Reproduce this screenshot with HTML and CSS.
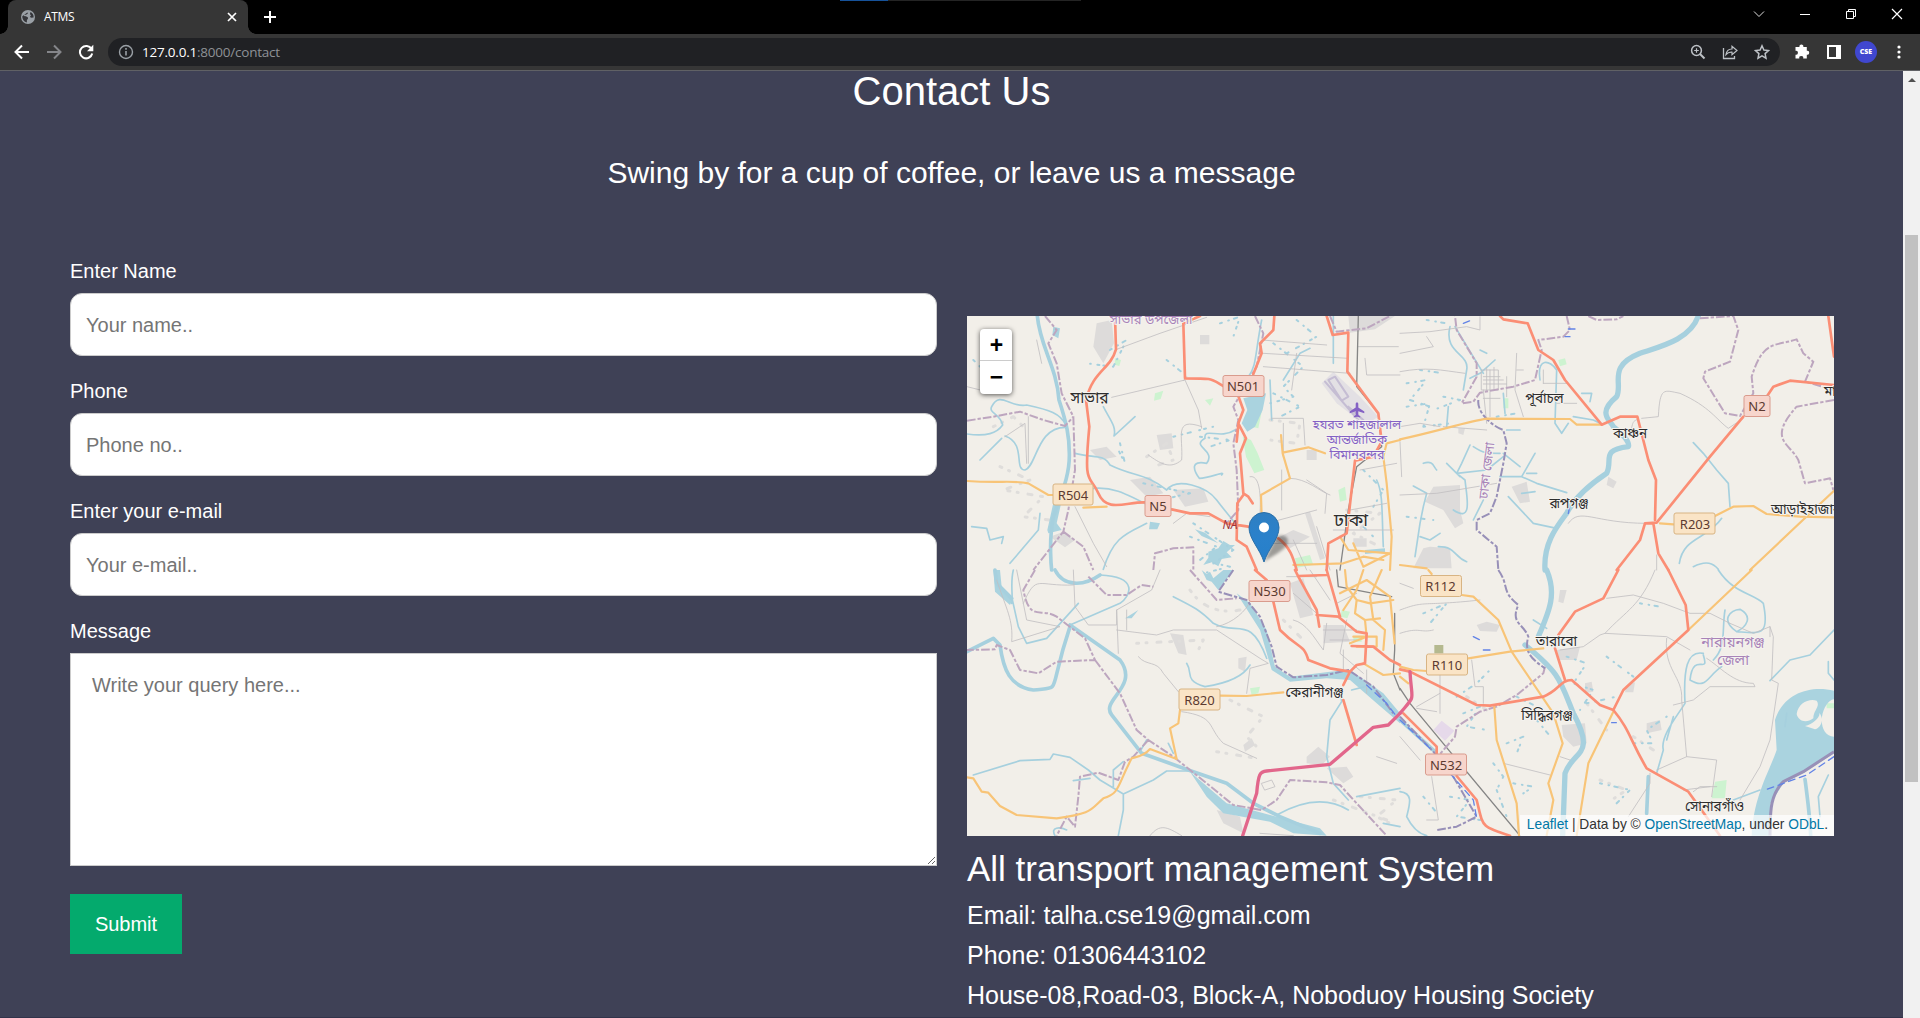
FILE: index.html
```html
<!DOCTYPE html>
<html lang="en">
<head>
<meta charset="utf-8">
<title>ATMS</title>
<link rel="stylesheet" href="styles.css">
</head>
<body>
<div class="browser">
  <header class="tabstrip">
    <span class="loadbar"></span>
    <div class="tab">
      <svg class="globe" viewBox="0 0 14 14"><circle cx="7" cy="7" r="7" fill="#9aa0a6"/><path d="M8 1.300 6.400 2.400l.5 1.200L5 4.800 3.500 4.700 2.700 6 4.800 6.200l2 1 .2 1.500-1.100 1.300v2.500A5.800 5.800 0 0 1 1.300 6.200M9.500 2l-.6 2.200 1.300 1-1.200 1 .8 1.600 2.800-.2A5.800 5.800 0 0 0 9.500 2" fill="#35363a"/></svg>
      <span class="tab-title">ATMS</span>
      <svg class="tab-close" viewBox="0 0 10 10"><path d="M1 1l8 8M9 1l-8 8" stroke="#fff" stroke-width="1.700"/></svg>
    </div>
    <svg class="newtab" viewBox="0 0 12 12"><path d="M6 0v12M0 6h12" stroke="#fff" stroke-width="2"/></svg>
    <div class="winbtns">
      <svg viewBox="0 0 12 12"><path d="M1 3.500l5 5 5-5" fill="none" stroke="#ddd"/></svg>
      <svg viewBox="0 0 12 12"><path d="M1 6.500h10" stroke="#fff"/></svg>
      <svg viewBox="0 0 12 12"><path d="M1.500 3.500h7v7h-7zM3.500 3.500v-2h7v7h-2" fill="none" stroke="#fff"/></svg>
      <svg viewBox="0 0 12 12"><path d="M1 1l10 10M11 1L1 11" stroke="#fff" stroke-width="1.200"/></svg>
    </div>
  </header>
  <nav class="toolbar">
    <div class="navbtns">
      <svg viewBox="0 0 16 16"><path d="M15 8H2M8 1.500L1.500 8 8 14.500" fill="none" stroke="#fff" stroke-width="2"/></svg>
      <svg viewBox="0 0 16 16"><path d="M1 8h13M8 1.500L14.500 8 8 14.500" fill="none" stroke="#85868a" stroke-width="2"/></svg>
      <svg viewBox="0 0 16 16"><path d="M13.500 5A6.200 6.200 0 1 0 14.200 9.500" fill="none" stroke="#fff" stroke-width="2"/><path d="M15.300.8v6.400H9z" fill="#fff"/></svg>
    </div>
    <div class="omnibox">
      <svg class="info" viewBox="0 0 16 16"><circle cx="8" cy="8" r="6.500" fill="none" stroke="#9aa0a6" stroke-width="1.400"/><path d="M8 7v4.500M8 4v1.700" stroke="#9aa0a6" stroke-width="1.600"/></svg>
      <span class="url"><b>127.0.0.1</b>:8000/contact</span>
      <div class="boxicons">
        <svg viewBox="0 0 16 16"><circle cx="6.500" cy="6.500" r="4.900" fill="none" stroke="#bdc1c6" stroke-width="1.500"/><path d="M10 10l4.500 4.500" stroke="#bdc1c6" stroke-width="2"/><path d="M6.500 4.200v4.600M4.200 6.500h4.600" stroke="#bdc1c6" stroke-width="1.200"/></svg>
        <svg viewBox="0 0 16 16"><path d="M1.500 4v10.500h11V12" fill="none" stroke="#bdc1c6" stroke-width="1.300"/><path d="M4 10.500C4.500 7 7 5 10 5V2.200L15 6.500 10 10.800V8.200C7.500 8 5.500 8.700 4 10.500z" fill="none" stroke="#bdc1c6" stroke-width="1.200"/></svg>
        <svg viewBox="0 0 16 16"><path d="M8 1.800l1.900 4.200 4.600.5-3.400 3.100.9 4.600L8 11.900l-4 2.300.9-4.600L1.500 6.500 6.100 6z" fill="none" stroke="#bdc1c6" stroke-width="1.500"/></svg>
      </div>
    </div>
    <svg class="ext" viewBox="0 0 16 16"><path d="M1.500 3.500h4a2 2 0 1 1 3.800 0h3.500v3.800a2 2 0 1 1 0 3.900v3.800H9.200a2 2 0 1 0-3.900 0H1.500v-3.800a2 2 0 1 0 0-3.900z" fill="#fff"/></svg>
    <svg class="panel" viewBox="0 0 14 14"><path d="M0 0h14v14H0zM2 2v10h7V2z" fill="#fff" fill-rule="evenodd"/></svg>
    <span class="avatar">CSE</span>
    <svg class="kebab" viewBox="0 0 4 14"><circle cx="2" cy="2" r="1.600" fill="#fff"/><circle cx="2" cy="7" r="1.600" fill="#fff"/><circle cx="2" cy="12" r="1.600" fill="#fff"/></svg>
  </nav>
  <div class="viewport">
    <main class="page">
      <h1>Contact Us</h1>
      <p class="lead">Swing by for a cup of coffee, or leave us a message</p>
      <div class="columns">
        <form class="form">
          <label for="name">Enter Name</label>
          <input id="name" type="text" placeholder="Your name..">
          <label for="phone">Phone</label>
          <input id="phone" type="text" placeholder="Phone no..">
          <label for="mail">Enter your e-mail</label>
          <input id="mail" type="text" placeholder="Your e-mail..">
          <label for="msg">Message</label>
          <textarea id="msg" placeholder="Write your query here..."></textarea>
          <button type="button">Submit</button>
        </form>
        <section class="info-col">
          <div class="map">
            <svg class="tiles" viewBox="0 0 867 520">
              <!-- north-west -->
              <g transform="translate(-7 -6) scale(.33333)">
                <g class="urban">
                  <path d="M410 40L455 30 462 100 430 160 400 110zM720 75h28v28h-28zM1165 18h140l-60 40-75 10zM510 510l60-10 40 50-50 10zM590 375l45-5 5 45-40 5zM640 540l90-5 15 40-70 15zM270 680l40-15 35 25-30 22zM1040 420h30v30h-30zM390 420l50-10 30 30-50 10zM940 690l60-30 50 20-60 35zM1180 685h40v25h-40zM1050 605l45 140-15 5-45-140z"/>
                  <path class="specks" d="M120 470l90 40-80 30 120 20-60 60 80 10M560 440l60-40 20 50-60 20M100 350l60-30 40 40M930 330l90 10-10 60-80-10M1160 600l100 10-80 60 80 40"/>
                </g>
                <path class="airport" d="M1085 220L1120 185 1200 260 1255 320 1215 345 1130 280z"/>
                <path class="runway" d="M1095 215l100 115M1105 210l20-10 40 60-20 12zM1165 290l45 40"/>
                <g class="park"><path d="M848 380l25 10 20 40 20 50-30 10-25-50zM465 145l18 5-5 18-14-4zM1005 745l45-10 10 30-50 8zM1135 540l20-10 5 40-20 5zM585 250l25-8-8 25-20 5zM875 350l15-40 15-5-10 50zM735 270l25-5-10 22z"/></g>
                <g class="water">
                  <path class="lake" d="M850 265L918 250 908 300 885 350 862 365 845 340 862 300zM262 660l20-90 28-20-20 90 15 20-40 10zM675 640l30 18 30 10 40 32-50-22-20-20zM745 725l30-10 15-22 20 12 15 0-25 22 15 15-30 5-10 22-20-12-25 8 15-22zM280 50l20 5-5 30-18-10zM570 635l30 5-8 18-25 0zM1215 720l60-5v12l-60 5z"/>
                  <path class="big" d="M232 18C240 110 290 170 297 270 320 340 328 380 328 430 330 500 300 560 280 620 265 700 275 780 275 780"/>
                  <path d="M21 372C80 380 110 370 128 345 120 310 85 310 95 290 120 240 150 295 200 285 270 300 300 310 318 345M60 450l65-65M135 378C200 400 160 480 195 480 230 470 230 350 318 352M345 430C400 445 430 430 450 465 520 500 560 490 620 540 650 500 740 530 770 570 800 610 820 630 825 640M560 640C500 670 460 680 430 778M240 610L235 660 150 760M430 290C450 330 470 350 462 378L525 320M825 360C780 390 730 350 735 385 690 410 770 420 740 460 690 450 700 480 718 505 750 505 800 480 785 495M905 30C885 130 890 170 865 200M1120 18L1120 160M35 650L80 655 90 690 130 680 125 700M930 210l5 120M970 210l50-80 30-15M1250 510c20 40 15 100 20 200M370 540c80-20 130 10 240 70"/>
                  <path class="specks" d="M40 150l60 60-50 20M450 120l50-30-40 80-80-10M620 150l50 40M780 40l60-20-20 60M1010 30l60 50-90 50M640 380l120-30M480 400l15 60-20-40M550 520l140 30-90 20M720 380l90 10-60 20M940 100l90 70-60 60 30 30-70 20M700 640l120 80-60 40M690 680l80 30-50 40 90 20-80 20M1180 620l60 60M940 250l80 40-60 30M1210 480l60 60-30 50"/>
                </g>
                <g class="minor"><path d="M470 118L600 70 740 22M455 262L675 210 715 300 725 355M725 350C640 320 670 380 665 450 630 480 600 460 565 435M905 90L1100 105M910 130L1165 145M910 170l260 20M1195 110h120M1215 145l5 50h100M935 325l95 0 5 80M965 480l0 120M1040 510l60 40-5 60M990 505c50 0 90 40 120 50M640 640L680 610 750 620M345 590L400 700 440 770M205 320l0 140M135 380l60-40 5 120M680 200l-10 12M870 500c40-10 30 110 30 110M920 640l150-40M930 700l140 0M1000 690l40 90M1070 650l40 130M1170 600l110-20M1120 660h180M230 90l15 70M21 230l40 10M1200 480l110-20M970 340v100M1010 130l-15 110"/></g>
                <path class="rail" d="M1195 18L1190 230 1255 310 1265 410 1190 470 1165 600 1140 780"/>
                <g class="bound"><path d="M255 18L290 60 265 100 290 160 305 250 340 320 345 480 325 600 310 665 220 780M21 332L100 320 180 305 250 330 315 348 340 320M310 665L370 710 400 780M885 18L910 70 890 170 820 290 835 330 820 400 830 480 835 600 800 640M1110 18L1130 65 1220 55 1290 18M580 780L585 730 640 715 700 712 700 780"/></g>
                <g class="sec"><path d="M21 513C120 520 160 510 205 520L265 555 290 555M370 593L440 590M1320 390L1280 400 1270 440 1280 520 1295 680 1290 780M963 375L968 430 990 505 903 555 905 620M968 428L1045 412 1095 430M1140 680L1165 720 1290 730 1210 770 1180 700M1000 765l150-5 60-20 60 10"/></g>
                <g class="prim"><path d="M465 18L468 118C450 180 400 180 378 270L388 350C370 540 390 490 415 550 440 610 500 575 555 577M635 598L690 610 745 610 800 640 865 650M720 18L670 40 675 205C760 205 750 205 790 228M943 18L940 60 900 100 905 130 880 192M835 258L850 300 835 340 858 385 840 430 850 550 865 560 878 580M835 345L830 395M850 555L832 580 830 690 860 710 890 780M955 685C990 710 1000 745 1010 780M1100 18L1118 75 1165 68 1162 185 1210 250 1255 310 1265 395 1240 440 1185 452 1160 670 1105 700 1100 780"/></g>
              </g>
              <!-- north-east -->
              <g transform="translate(433 -6) scale(.33333)">
                <g class="urban"><path d="M100 530L180 525 180 600 190 640 165 655 130 600 75 575zM335 530l45-15 10 60-30 5zM90 710l60 5 5 60H40l30-60zM625 500l25 15-10 20-20-10zM175 355l20 0-5 20-15-5z"/></g>
                <path class="park" d="M475 150l20-5 5 18-20 6zM310 265h15v30h-15z"/>
                <g class="water">
                  <path class="huge" d="M895 18C870 90 780 110 720 130 620 170 670 220 650 260 590 310 630 330 640 350 670 370 690 400 685 410 600 420 640 450 620 490 560 530 520 570 500 610 470 650 430 700 435 780"/>
                  <path d="M150 50C130 130 210 130 200 180L190 240M165 50L250 190M210 205L240 190 285 150M40 528L80 550 70 590 60 640 45 740M160 600C220 640 200 560 195 510L170 490 185 460 210 405M140 460l40 40M170 490L260 480 310 440M300 500L365 500 410 520 500 548M365 500L405 430M380 490h30M310 430L360 470M325 560L400 640 470 655M60 680L90 690 120 670M115 710C170 710 160 740 200 755M880 398L910 430 950 480 985 520 990 590M965 625C920 690 850 680 838 760M880 770C920 750 940 760 955 778M420 210C410 140 450 150 470 180L465 340 485 370 505 340M70 460c30-10 30 10 40 20M145 290l-5 60M545 250l30 0-5 25M320 360h40M520 320l60 10 20 10M220 630l30-60M365 550l40-5M260 130l-20-10M310 250l5 60M220 410c30 20 40 20 80 20"/>
                  <path class="specks" d="M20 220l60-10-50 60 60 20M60 180l70 10M130 260l50 10-80 30M20 290l70-10-20 70 80-10M80 30l60 10M290 320l60-10M20 620l80 10"/>
                </g>
                <g class="minor"><path d="M0 70L90 65 200 50 240 60 240 20M0 130L100 110 80 80M0 185C80 170 120 180 195 190M0 395L5 500M0 555L110 550 290 520M725 325L775 320C780 230 790 240 840 250 930 290 950 330 985 355L1030 325M690 380C700 320 700 340 715 325M505 640C540 590 580 640 740 640M350 130L345 240 370 320M430 220h70M430 180v40M245 180h50v60h-50zM250 200h50M260 172v70M282 172v70M250 222h70M270 180v140M320 200v60M250 210h60M250 265h50M260 340L250 240M130 350l130 10M0 350l60-10 60 10M470 280h60M770 735V780M350 180h20"/></g>
                <g class="bound"><path d="M500 18L510 60 490 80 415 90 425 120 405 210 340 230 240 248 220 275 185 280 230 200 230 160 170 60 165 18M565 18L590 30 650 28 670 18M900 25L1000 18 1015 60 990 155 915 185 910 205 975 310 1020 318 1060 250 1055 200C1090 90 1120 110 1190 88L1210 130 1240 155 1215 215 1302 240M1302 270L1190 290C1100 390 1170 400 1195 450L1215 520 1290 505 1300 540"/></g>
                <path class="bound dist" d="M235 270C230 310 280 350 310 360L320 400 310 460 290 560 270 610 230 630 230 660 290 710 295 780"/>
                <g class="sec"><path d="M0 388C110 365 200 335 260 326L510 327 530 344 605 344M780 640L820 643M945 618L1000 590 1060 588 1100 612 1200 620 1302 622M1302 542L1050 780M0 765l80 10"/></g>
                <g class="prim"><path d="M300 18L310 28 383 40 415 120 460 150 495 210 605 344 660 320 712 320 745 450 768 510 765 630M1285 18L1302 140M1302 225L1170 212 1120 230 1100 260M1030 320L930 440 770 638 735 640 720 690 650 780M760 640L775 730 805 780"/></g>
                <path class="canal" d="M190 40l20-8M495 80h15M505 57h22M508 595l-3 15"/>
              </g>
              <!-- south-west -->
              <g transform="translate(-7 254) scale(.33333)">
                <g class="urban"><path d="M630 190l40 5 10 60-25-5zM835 265l25-5-5 45-20-10zM1040 560L1075 530 1110 560 1085 585 1040 580zM850 525l25-20 10 20-30 20zM1100 595l60-5 20 30-30 20zM770 720l70 20 10 50-60-30zM990 40l40-15 30 110-40 10zM1090 165h60l20 50-80 5z"/><path class="specks" d="M810 390l100 50-50 60 30 30M770 545l120 20M1200 680l110 10-60 50 60 30M1120 690l160 60M530 220l200-10-20 40M690 60c40 60 100 70 150 60M970 150l60 60"/></g>
                <path class="park" d="M870 355l30-5-5 20-20 5zM1180 200h25v15h-25zM1145 120l25 5-8 20-20-5z"/>
                <g class="water">
                  <path class="lake" d="M725 0L740 12 750 5 760 25 790 0 820 0 775 60 755 35 740 30zM830 70L870 100 920 180 945 290 990 320 1110 305 1170 300 1270 370 1320 430 1320 460 1250 400 1170 330 1100 325 990 335 935 300 900 180zM690 605L800 700 930 735 1080 775 1100 797 1000 790 930 755 790 730 740 680zM495 145l40-25-20 25zM100 0l20 0 5 50 35 35-10 20-45-40z"/>
                  <path class="big" d="M105 0L110 40 155 85M330 165L480 270C540 350 420 390 455 435L545 550 700 605 800 640 880 700 960 740 1080 790M330 170C260 380 310 350 220 360 150 350 130 300 120 225L100 205 21 245M285 0C310 50 370 50 420 15"/>
                  <path d="M420 15C540 20 510 80 480 100L330 165M155 80L175 170 200 220 260 205 355 100M40 615L180 572 270 568 280 552 330 562 385 600 420 630 490 672 580 630 620 603 700 603M490 672L490 720 475 797M490 575L460 600 460 650M560 510L540 545M640 80C700 110 720 120 760 160 830 200 870 130 920 265M680 280C700 310 670 330 735 350 800 340 850 320 870 285M1145 395L1110 450 1100 560 1120 640 1165 690M1190 680L1320 655M950 735C1030 690 1100 680 1165 720M160 0C150 40 160 80 155 100M285 797C270 770 300 770 320 780M1270 760l50 10M340 632L390 625M625 520l15 30M1145 395L1140 360M1175 360l40-10"/>
                </g>
                <g class="minor"><path d="M340 0L345 110 385 165 470 165 470 120 575 60 600 0M470 120L475 250M470 180L590 195 640 180 770 180 900 265 925 280 870 295 860 370M535 260C560 290 590 270 610 310L655 365M665 425C770 440 740 470 790 520L890 565M500 120v60M190 100C230 10 230 50 340 45M110 30C140 120 160 150 155 215L300 170 200 150 170 0M570 797C600 760 620 770 665 797M770 170C820 160 860 120 870 95M1000 150C1040 160 1060 200 1090 240L1100 160M1130 100l60-30M1050 0l60 90M980 20l90 0M1160 150l-20 100 70 60M1090 180h100M1110 210h80M1070 130L1000 70M1220 300v70M1150 240v60M900 790L1000 797M1250 560l60 20M905 640l30-10 10 20-30 10z"/></g>
                <path class="rail" d="M1130 0L1135 50 1240 70 1295 80M1304 130V240L1300 310 1320 360"/>
                <g class="bound"><path d="M225 0L190 60C210 160 240 110 290 140L375 205 405 270 290 275 235 310 180 300 150 240 110 225 105 238 21 240M405 270L480 370 530 480 565 510 640 560 740 640 820 705 905 720 950 690 990 630 1100 637 1140 645 1190 700 1280 797M565 510L520 560 495 575 475 630 415 608 360 620 355 680 345 770 320 740 290 797M385 20L440 75 500 75 545 45 580 50M690 0L770 90 830 85"/></g>
                <path class="bound dist" d="M820 0L775 65 860 90 900 140 935 230 950 290 1000 322 1100 315 1165 300 1240 350 1300 430"/>
                <path class="canal" d="M1220 345l60 55 30 40"/>
                <g class="sec"><path d="M21 622L40 625 65 665 85 668 120 708 170 735 290 745C400 730 390 720 430 685 480 670 470 650 515 565 530 560 550 560 570 537L650 567 630 475 655 460 660 420M780 377L860 378 970 367M1155 0L1160 50 1190 90 1185 130 1215 150 1220 200 1170 220M1190 90L1230 100 1300 90M1265 0L1230 80 1240 150 1275 180 1270 240M1140 70L1220 30 1290 80 1304 220M1215 150L1260 145M1150 120L1190 60 1210 0M1210 280L1270 315 1320 310M1180 200h70v30h-60"/></g>
                <g class="prim"><path d="M885 0L920 30M940 95L960 180C1020 240 1030 220 1045 270L1110 295 1170 305 1190 285 1215 280 1220 190 1190 185 1135 140 1070 135M1005 0L1015 20 1070 120 1078 170M1015 18L1100 15M1100 0L1140 140M1175 228L1240 230 1290 270 1320 285M1170 305L1150 345M1150 390L1190 525"/></g>
                <path class="mway" d="M848 797L890 670C895 610 900 605 920 603L1110 583 1240 472 1285 465 1320 430"/>
              </g>
              <!-- south-east -->
              <g transform="translate(433 254) scale(.33333)">
                <g class="urban"><path d="M230 165L260 155 300 165 290 185 240 183zM485 465L555 460 560 520 520 530 490 500zM480 60l20 0-10 40-15-5zM470 240l70-10-10 40-50 0zM555 340l20-5 5 30-25 5zM680 345l25-8-5 30-25 0zM740 460l40-10 5 30-45 10z"/><path class="specks" d="M200 380l60 40M600 630l80 30-60 40M700 500l60 40M560 400l60 80"/></g>
                <path d="M100 480l25-28 38 30-28 30z" fill="#e6d9ea"/><path d="M103 225h27v25h-27z" fill="#b5b98f"/>
                <path class="park" d="M945 635L980 630 975 685 935 685zM1280 400h22v15h-22z"/>
                <g class="water">
                  <path class="lake" fill-rule="evenodd" d="M1302 362C1230 345 1150 370 1125 450L1130 540C1110 600 1060 680 1055 797H1107L1112 700 1150 640 1210 610 1302 550V500C1275 500 1262 470 1266 440 1270 415 1285 390 1302 388zM1190 432C1195 400 1225 385 1250 392 1262 410 1240 420 1240 445 1220 460 1195 455 1190 432zM1215 468C1240 462 1262 440 1258 428 1275 450 1260 475 1245 478z"/>
                  <path class="huge" d="M440 0C470 70 450 120 415 200M375 225C480 310 480 330 520 430 590 560 520 540 495 610L488 797"/>
                  <path class="big" d="M0 450L105 545M745 620L740 730M1215 628C1222 680 1230 740 1232 797"/>
                  <path d="M955 0C1000 70 1060 70 1090 100 1110 200 1080 190 1010 185 960 150 990 120 1020 118 1060 140 1040 170 1010 185M975 120C965 180 980 230 940 270M910 255C930 320 880 240 870 330 920 360 920 320 965 290M910 250C860 240 850 300 855 400 830 440 780 500 790 540L770 610M820 440L800 510M1110 332L1170 270 1230 255 1302 180M1285 275V310L1302 330M1000 690L1080 660M0 665C40 670 30 700 20 740 30 760 50 790 80 797M400 150l40 25M1285 615L1255 680 1260 740M1160 430l-5 40"/>
                  <path class="specks" d="M70 130l70-30-50 60M170 380l60-40 40-40M190 430l50-20-40 60 60 10M320 520l50-20-20 50M500 260l60 20-40 60 60 20-40 60M350 380l60 30M410 450l50 60M280 580l30 40-20 40 30 80M340 640l60 10-30 20M150 680l60 10-40 50 70 10M600 640l90 20-40 40M700 520l60 0-20-40 60-40M720 100l60 10M620 260l80 60M560 400l90-20M70 680l50 60"/>
                </g>
                <g class="minor"><path d="M0 120C80 90 60 110 240 90M0 190C60 170 60 190 100 180M620 85L700 75 790 100 870 130 930 130 990 160 1060 190 1110 170 1120 200 1115 330 1135 340 1110 510 1080 590 1020 690M765 0C720 110 680 120 615 190L800 200 870 240M480 240L550 230 600 195 615 190M800 205C790 300 850 320 845 390L860 560 950 570 935 680M820 405L880 390 930 350 1065 350 1060 340C1000 340 960 290 920 265M310 580L450 615M215 270L225 350 250 350 250 400M50 410l70-40M120 310V430M50 415l60 10M685 740L750 640 750 610M930 650L850 660M1110 170v30M0 500l60 70M95 620L115 750 80 750M770 600l90-40M480 560l30 10M0 40l40 15M950 650h-50l-20 15"/></g>
                <path class="rail" d="M0 355L30 400 150 545 360 797"/>
                <g class="bound"><path d="M100 575L165 500 170 470 240 425 290 410 350 375 430 310 435 290"/></g>
                <path class="bound dist" d="M295 0C330 50 300 60 355 105 330 160 370 160 385 200 370 250 400 270 435 295"/>
                <path class="bound dist solid" d="M1302 545L1210 605 1150 635C1105 680 1112 740 1110 797"/>
                <path class="bound dist" d="M0 440L100 545 160 620 230 740 170 770 110 780"/>
                <path class="canal" d="M1302 560L1220 615 1095 660M0 450l90 85M150 610L220 690 230 745M220 200l20 10M250 240h22M635 458h14"/>
                <g class="sec"><path d="M1055 0L865 180M85 0l10 12M185 75L220 80 295 150 335 245 460 430 488 520 445 640 460 690 440 797M205 265L330 245 430 235M0 290L40 300 80 303M283 410L290 510 350 700 357 797M640 425L565 580 530 797M0 320l25 20"/></g>
                <g class="prim"><path d="M655 0L610 85 525 125 475 195M465 235L495 330M805 0L857 105 865 180 670 360 640 420M0 298L30 305 230 405 270 407 430 380C480 360 480 330 515 330L600 405 640 420C690 480 690 510 740 595L865 665 890 700 960 797M10 430L110 530V550M170 618L230 690C250 770 240 770 330 797"/></g>
                <path class="mway" d="M30 305C35 400 50 370 0 430"/>
              </g>
              <g class="places">
                <text x="122.500" y="87" font-size="16">সাভার</text>
                <text class="city" x="384" y="210">ঢাকা</text>
                <text x="577.500" y="86.500">পূর্বাচল</text>
                <text x="663" y="122">কাঞ্চন</text>
                <text x="602" y="192">রূপগঞ্জ</text>
                <text x="839" y="198">আড়াইহাজার</text>
                <text class="edge" x="857" y="80">মা</text>
                <text x="589.500" y="329.500">তারাবো</text>
                <text x="347.500" y="381">কেরানীগঞ্জ</text>
                <text x="580" y="404">সিদ্ধিরগঞ্জ</text>
                <text x="747.500" y="495">সোনারগাঁও</text>
                <g class="purple">
                  <text x="184" y="8">সাভার উপজেলা</text>
                  <text class="wide" x="766" y="331">নারায়নগঞ্জ</text>
                  <text class="wide" x="766" y="349">জেলা</text>
                  <text transform="translate(524 155) rotate(-83)" x="0" y="0">ঢাকা জেলা</text>
                </g>
                <g class="violet">
                  <text x="390" y="113">হযরত শাহজালাল</text>
                  <text x="390" y="127.500">আন্তর্জাতিক</text>
                  <text x="390" y="142.500">বিমানবন্দর</text>
                </g>
              </g>
              <path d="M390 86l1.300 1.500v4l6 4v1.800l-6-2v3.700l2 1.500v1l-3.300-.8-3.300.8v-1l2-1.500v-3.700l-6 2v-1.800l6-4v-4z" fill="#8461c4"/>
              <g class="shields">
                <g class="n"><rect x="256" y="59.500" width="41" height="21" rx="2"/><rect x="178" y="179.500" width="26" height="21" rx="2"/><rect x="777" y="79.500" width="26" height="21" rx="2"/><rect x="282" y="264.500" width="41" height="21" rx="2"/><rect x="458.500" y="438" width="41" height="21" rx="2"/></g>
                <g class="r"><rect x="86" y="168" width="40" height="21" rx="2"/><rect x="707" y="197" width="41" height="21" rx="2"/><rect x="453.500" y="259.500" width="41" height="21" rx="2"/><rect x="459.500" y="338" width="41" height="21" rx="2"/><rect x="212" y="373" width="41" height="21" rx="2"/></g>
                <text x="276" y="75">N501</text><text x="191" y="195">N5</text><text x="790" y="95">N2</text><text x="302.500" y="280">N530</text><text x="479" y="453.500">N532</text>
                <text x="106" y="184">R504</text><text x="728" y="212.500">R203</text><text x="473.500" y="275">R112</text><text x="480" y="353.500">R110</text><text x="232.500" y="389">R820</text>
                <text class="na" x="263" y="213">NA</text>
              </g>
            </svg>
            <svg class="marker" viewBox="0 0 52 54">
              <defs><linearGradient id="pin" x2="0" y2="1"><stop offset="0" stop-color="#2f7fc2"/><stop offset=".5" stop-color="#2a81cb"/><stop offset="1" stop-color="#267fca"/></linearGradient><filter id="soft"><feGaussianBlur stdDeviation="1.800"/></filter></defs>
              <path d="M16 51L28 26C36 22 42 26 39 34 34 41 24 45 16 51z" fill="#000" opacity=".35" filter="url(#soft)"/>
              <path d="M16 51C12 38 1 28 1 16.500a15 15 0 0 1 30 0C31 28 20 38 16 51z" fill="url(#pin)" stroke="#2a6fa8"/>
              <circle cx="16" cy="16.500" r="5" fill="#fff"/>
            </svg>
            <div class="zoomctl"><span>+</span><span>−</span></div>
            <div class="attribution"><a>Leaflet</a> | Data by © <a>OpenStreetMap</a>, under <a>ODbL</a>.</div>
          </div>
          <h3>All transport management System</h3>
          <p>Email: talha.cse19@gmail.com</p>
          <p>Phone: 01306443102</p>
          <p>House-08,Road-03, Block-A, Noboduoy Housing Society</p>
        </section>
      </div>
    </main>
    <aside class="scrollbar"><span class="arrow"></span><span class="thumb"></span></aside>
  </div>
</div>
</body>
</html>
```
FILE: styles.css
```css
* { box-sizing: border-box; }
body { margin: 0; font-family: "Liberation Sans", Arial, sans-serif; background: #3f4156; }
.browser { display: flex; flex-direction: column; width: 1920px; height: 1018px; overflow: hidden; }
svg { display: block; }

/* Browser chrome */
.tabstrip { position: relative; display: flex; height: 34px; background: #000; padding-left: 8px; flex: none; }
.loadbar { position: absolute; left: 840px; top: 0; width: 241px; height: 1px; background: linear-gradient(90deg, #16529a 48px, #242424 48px); }
.tab { position: relative; display: flex; align-items: center; width: 240px; height: 34px; padding: 0 11px 0 13px; border-radius: 8px 8px 0 0; background: #363636; }
.tab::before, .tab::after { content: ""; position: absolute; bottom: 0; width: 8px; height: 8px; }
.tab::before { left: -8px; background: radial-gradient(circle at 0 0, #000 7.500px, #363636 8px); }
.tab::after { right: -8px; background: radial-gradient(circle at 100% 0, #000 7.500px, #363636 8px); }
.globe { width: 14px; height: 14px; }
.tab-title { margin-left: 9px; flex: 1; color: #fff; font: 12px/16px "Open Sans", "Noto Sans", sans-serif; letter-spacing: -.3px; padding-bottom: 1px; }
.tab-close { width: 10px; height: 10px; }
.newtab { width: 12px; height: 12px; margin: 11px 0 0 16px; }
.winbtns { display: flex; gap: 34px; margin: 8px 17px 0 auto; }
.winbtns svg { width: 12px; height: 12px; }
.toolbar { display: flex; align-items: center; height: 37px; padding: 0 18px 1px 14px; background: #363636; border-bottom: 1px solid #606165; flex: none; }
.navbtns { display: flex; gap: 16px; }
.navbtns svg { width: 16px; height: 16px; }
.omnibox { display: flex; align-items: center; width: 1672px; height: 28px; margin-left: 14px; padding: 0 10px; border-radius: 14px; background: #202124; }
.info { width: 16px; height: 16px; }
.url { margin-left: 8px; flex: 1; color: #8e9196; font: 13.500px "Open Sans", "Noto Sans", sans-serif; letter-spacing: -.22px; }
.url b { font-weight: 400; color: #fff; }
.boxicons { display: flex; gap: 16px; }
.boxicons svg { width: 16px; height: 16px; }
.ext { width: 16px; height: 17px; margin-left: 14px; }
.panel { width: 14px; height: 14px; margin-left: 17px; }
.avatar { width: 22px; height: 22px; margin-left: 14px; border-radius: 50%; background: #4047cf; color: #fff; font: 800 7px/21px "Open Sans", sans-serif; text-align: center; }
.kebab { width: 4px; height: 14px; margin-left: auto; margin-right: 1px; }

/* Page */
.viewport { display: flex; height: 947px; }
.page { width: 1903px; height: 947px; overflow: hidden; color: #fff; background: #3f4156; border-bottom: 1px solid #32334a; }
h1 { margin: 0 0 44px; font-size: 40px; line-height: 40px; font-weight: 400; text-align: center; }
.lead { margin: 0; font-size: 30px; line-height: 36px; text-align: center; }
.columns { display: flex; gap: 30px; padding: 0 69px 0 70px; }
.form { display: flex; flex-direction: column; width: 867px; padding-top: 65px; }
label { font-size: 20px; line-height: 30px; margin-bottom: 7px; }
input, textarea { width: 867px; border: 1px solid #ccc; background: #fff; font: 20px/25px "Liberation Sans", Arial, sans-serif; outline: none; }
input { height: 63px; margin: 0 0 20px; padding: 2px 15px 0; border-radius: 12px; }
textarea { height: 213px; margin: 0 0 28px; padding: 19px 21px; resize: vertical; }
input::placeholder, textarea::placeholder { color: #757575; }
button { width: 112px; height: 60px; padding: 0; border: 0; background: #04aa6d; color: #fff; font: 20px "Liberation Sans", Arial, sans-serif; }
.info-col { width: 867px; padding-top: 125px; }
.info-col h3 { margin: 12px 0 10px; font-size: 35px; line-height: 42px; font-weight: 400; }
.info-col p { margin: 0 0 10px; font-size: 25px; line-height: 30px; white-space: nowrap; }

/* Map */
.map { position: relative; height: 520px; overflow: hidden; background: #f2efe9; }
.tiles { width: 867px; height: 520px; }
.tiles path { stroke-linejoin: round; stroke-linecap: round; }
.urban path { fill: #dddbda; }
.urban .specks { fill: none; stroke: #dfdddb; stroke-width: 9; stroke-dasharray: 6 22 3 30 12 26; }
.airport { fill: #e3e0e4; }
.runway { fill: none; stroke: #c5bdd3; stroke-width: 6; }
.park, .park path { fill: #cdf3d0; }
.water path { fill: none; stroke: #a6d0de; stroke-width: 5; }
.water .lake { fill: #aad3df; stroke: none; }
.water .big { stroke-width: 11; }
.water .huge { stroke-width: 16; }
.water .specks { stroke-width: 6; stroke-dasharray: 6 20 2 16 10 26 3 12; }
.minor path { fill: none; stroke: #c2bfc2; stroke-width: 2.5; }
.rail { fill: none; stroke: #858585; stroke-width: 4; }
.bound path, .bound.dist { fill: none; stroke: #bda6bf; stroke-width: 6; stroke-dasharray: 26 6 10 6; }
.bound.dist { stroke: #9890b8; }
.bound.dist.solid { stroke-dasharray: none; stroke-width: 9; }
.tiles .bound path, .tiles .bound.dist { stroke-linecap: butt; }
.sec path { fill: none; stroke: #f8c477; stroke-width: 6.5; }
.prim path { fill: none; stroke: #fb8e75; stroke-width: 8; }
.mway { fill: none; stroke: #e2668b; stroke-width: 10; }
.canal { fill: none; stroke: #6283e6; stroke-width: 4; stroke-dasharray: 20 14; }
.places text { font-family: "Noto Sans Bengali", "Noto Sans", sans-serif; font-size: 13.500px; text-anchor: middle; fill: #2d2d2d; stroke: #f5f3ef; stroke-width: 2px; paint-order: stroke; }
.places text.city { font-size: 18px; }
.places text:first-child { font-size: 15.500px; }
.places text.edge { text-anchor: start; }
.places .purple text { fill: #a883b8; font-size: 13px; }
.places .purple text.wide { font-size: 14.500px; }
.places .violet text { fill: #8461c4; font-size: 12.500px; }
.shields rect { stroke-width: 1; }
.n rect { fill: #f7d5cc; stroke: #d99b8d; }
.r rect { fill: #fae4c6; stroke: #d8b483; }
.shields text { font: 13px "Noto Sans", sans-serif; fill: #5c3a30; text-anchor: middle; }
.shields .na { font-style: italic; font-size: 12px; fill: #a03338; }
.marker { position: absolute; left: 281px; top: 195px; width: 52px; height: 54px; }
.zoomctl { position: absolute; left: 13px; top: 13px; width: 32px; height: 65px; border-radius: 4px; background: #fff; box-shadow: 0 1px 5px rgba(0, 0, 0, .65); color: #000; }
.zoomctl span { display: block; height: 31px; font: bold 23px/32px "Liberation Sans", Arial, sans-serif; text-align: center; padding-left: 1px; }
.zoomctl span + span { border-top: 1px solid #ccc; height: 34px; }
.attribution { position: absolute; right: 0; bottom: 0; height: 21px; padding: 0 6px 0 7px; background: rgba(255, 255, 255, .7); color: #333; font-size: 13.750px; line-height: 19px; white-space: nowrap; }
.attribution a { color: #0078a8; }

/* Scrollbar */
.scrollbar { width: 17px; height: 947px; padding: 7px 2px 0; background: #f1f1f1; }
.arrow { display: block; width: 8px; margin: 0 auto; border: 4px solid transparent; border-top: 0; border-bottom-color: #505050; }
.thumb { display: block; width: 13px; height: 547px; margin-top: 153px; background: #c1c1c1; }
```
